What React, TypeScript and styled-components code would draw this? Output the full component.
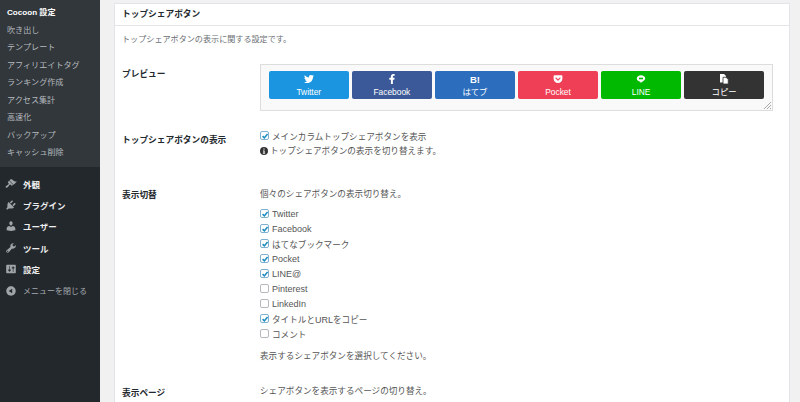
import React from "react";
import styled, { createGlobalStyle } from "styled-components";
import { FaTwitter, FaFacebookF, FaGetPocket } from "react-icons/fa";

const GlobalStyle = createGlobalStyle`
  html, body {
    margin: 0;
    height: 402px;
    overflow: hidden;
    background: #f1f1f1;
    font-family: "Liberation Sans", "Noto Sans CJK JP", sans-serif;
    font-size: 8.1px;
    color: #444;
  }
`;

const Page = styled.div`
  display: flex;
  height: 402px;
  overflow: hidden;
`;

const Sidebar = styled.nav`
  width: 100px;
  flex: none;
  background: #23282d;
`;

const SubMenu = styled.ul`
  margin: 0;
  padding: 4px 0 5px;
  list-style: none;
  background: #32373c;
`;

const SubItem = styled.li<{ $current?: boolean }>`
  height: 17.5px;
  line-height: 17.5px;
  padding-left: 7px;
  color: ${(p) => (p.$current ? "#fff" : "#b4b9be")};
  font-weight: ${(p) => (p.$current ? 700 : 400)};
`;

const MainMenu = styled.ul`
  margin: 0;
  padding: 6.5px 0 0;
  list-style: none;
`;

const MainItem = styled.li<{ $muted?: boolean }>`
  display: flex;
  align-items: center;
  gap: 6px;
  height: 21.4px;
  padding-left: 5px;
  font-size: ${(p) => (p.$muted ? "8px" : "8.5px")};
  color: ${(p) => (p.$muted ? "#a5aaaf" : "#eee")};
  font-weight: ${(p) => (p.$muted ? 400 : 700)};
  svg {
    width: 12px;
    height: 12px;
    flex: none;
    fill: #a0a5aa;
  }
`;

const Content = styled.main`
  flex: 1;
  min-width: 0;
  padding: 3px 10px 0 14px;
`;

const Card = styled.section`
  background: #fff;
  border: 1px solid #e2e4e7;
  box-sizing: border-box;
  height: 500px;
`;

const CardTitle = styled.h2`
  margin: 0;
  height: 21px;
  line-height: 21px;
  padding-left: 7px;
  border-bottom: 1px solid #e5e5e5;
  font-size: 8.7px;
  font-weight: 700;
  color: #23282d;
`;

const CardBody = styled.div`
  padding: 8px 8px 0 7px;
`;

const Lead = styled.p`
  margin: 0 0 18px;
  height: 12px;
  line-height: 12px;
  color: #6b6f73;
`;

const Row = styled.div<{ $height: number }>`
  display: grid;
  grid-template-columns: 138px 1fr;
  min-height: ${(p) => p.$height}px;
`;

const RowLabel = styled.div<{ $top: number }>`
  padding-top: ${(p) => p.$top}px;
  line-height: 12px;
  font-size: 8.7px;
  font-weight: 700;
  color: #23282d;
`;

const PreviewBox = styled.div`
  position: relative;
  width: 513px;
  height: 47px;
  box-sizing: border-box;
  display: flex;
  gap: 3.5px;
  padding: 6px 8px 0 8px;
  border: 1px solid #ddd;
  background: #f9f9f9;
`;

const ResizeGrip = styled.svg`
  position: absolute;
  right: 0;
  bottom: 0;
  width: 9px;
  height: 9px;
  stroke: #aaa;
  stroke-width: 1;
`;

const ShareButton = styled.div<{ $bg: string }>`
  flex: 1;
  height: 28px;
  box-sizing: border-box;
  display: flex;
  flex-direction: column;
  align-items: center;
  padding-top: 3px;
  border-radius: 2px;
  background: ${(p) => p.$bg};
  color: #fff;
  font-size: 8.4px;
  line-height: 10px;
  svg {
    width: 10px;
    height: 10px;
    margin-bottom: 3px;
    fill: #fff;
    flex: none;
  }
`;

const HatenaMark = styled.b`
  height: 13px;
  line-height: 11px;
  font-size: 9.5px;
`;

const CheckRow = styled.label`
  display: flex;
  align-items: center;
  gap: 3px;
  height: 15px;
  font-size: 8.6px;
  color: #555;
`;

const LatinText = styled.span`
  font-size: 9px;
`;

const Box = styled.span<{ $checked?: boolean }>`
  width: 9px;
  height: 9px;
  flex: none;
  box-sizing: border-box;
  display: flex;
  align-items: center;
  justify-content: center;
  border: 1px solid ${(p) => (p.$checked ? "#7fb0d0" : "#b4b9be")};
  border-radius: 2px;
  background: #fff;
  svg {
    width: 8px;
    height: 8px;
    flex: none;
    fill: none;
    stroke: #1e8cbe;
    stroke-width: 2;
  }
`;

const Note = styled.div<{ $before?: number; $after?: number }>`
  height: 15px;
  line-height: 15px;
  margin-top: ${(p) => p.$before ?? 0}px;
  margin-bottom: ${(p) => p.$after ?? 0}px;
  font-size: 8.6px;
  color: #555;
`;

const InfoIcon = styled.svg`
  width: 8px;
  height: 8px;
  margin-right: 2px;
  vertical-align: -1px;
  fill: #333;
`;

const Check = ({ checked, label }: { checked?: boolean; label: string }) => (
  <CheckRow>
    <Box $checked={checked}>
      {checked && (
        <svg viewBox="0 0 10 10">
          <path d="M2 5.2 4.2 7.4 8.2 2.6" />
        </svg>
      )}
    </Box>
    <span>
      {label
        .split(/([A-Za-z@]+)/)
        .map((part, i) => (i % 2 ? <LatinText key={i}>{part}</LatinText> : part))}
    </span>
  </CheckRow>
);

const dashicons = {
  appearance:
    "M14.48 11.06L7.41 3.99l1.5-1.5c.5-.56 2.3-.47 3.51.32 1.21.8 1.43 1.28 2.91 2.1 1.18.64 2.45 1.26 4.45.85zm-.71.71L6.7 4.7 4.93 6.47c-.39.39-.39 1.02 0 1.41l1.06 1.06c.39.39.39 1.03 0 1.42-.6.6-1.43 1.11-2.21 1.69-.35.26-.7.53-1.01.84C1.43 13.23.4 14.85 1.4 15.85c.99 1 2.62-.03 3.96-1.37.31-.31.58-.66.85-1.02.57-.78 1.08-1.61 1.69-2.21.39-.39 1.02-.39 1.41 0l1.06 1.06c.39.39 1.02.39 1.41 0z",
  plugins:
    "M13.11 4.36L9.87 7.6 8 5.73l3.24-3.24c.35-.34 1.05-.2 1.56.32.52.51.66 1.21.31 1.55zm-8 1.77l.91-1.12 9.01 9.01-1.19.84c-.71.71-2.63 1.16-3.82 1.16H6.14L4.9 17.26c-.59.59-1.54.59-2.12 0-.59-.58-.59-1.53 0-2.12l1.24-1.24v-3.88c0-1.13.4-3.19 1.09-3.89zm7.26 3.97l3.24-3.24c.34-.35 1.04-.21 1.55.31.52.51.66 1.21.31 1.55l-3.24 3.25z",
  users:
    "M10 9.25c-2.27 0-2.73-3.44-2.73-3.44C7 4.02 7.82 2 9.97 2c2.16 0 2.98 2.02 2.71 3.81 0 0-.41 3.44-2.68 3.44zm0 2.57L12.72 10c2.39 0 4.52 2.33 4.52 4.53v2.49s-3.65 1.13-7.24 1.13c-3.65 0-7.24-1.13-7.24-1.13v-2.49c0-2.25 1.94-4.48 4.47-4.48z",
  tools:
    "M16.68 9.77c-1.34 1.34-3.3 1.67-4.95.99l-5.41 6.52c-.99.99-2.59.99-3.58 0s-.99-2.59 0-3.58l6.52-5.42c-.68-1.65-.35-3.61.99-4.95 1.28-1.28 3.12-1.62 4.72-1.06l-2.89 2.89 2.82 2.82 2.86-2.87c.53 1.58.18 3.39-1.08 4.66zM3.81 16.21c.4.39 1.04.39 1.43 0 .4-.4.4-1.04 0-1.43-.39-.4-1.03-.4-1.43 0-.39.39-.39 1.03 0 1.43z",
  settings:
    "M18 16V4c0-.55-.45-1-1-1H3c-.55 0-1 .45-1 1v12c0 .55.45 1 1 1h14c.55 0 1-.45 1-1zM8 11h1c.55 0 1 .45 1 1s-.45 1-1 1H8v1.5c0 .28-.22.5-.5.5s-.5-.22-.5-.5V13H6c-.55 0-1-.45-1-1s.45-1 1-1h1V5.5c0-.28.22-.5.5-.5s.5.22.5.5V11zm5-2h-1c-.55 0-1-.45-1-1s.45-1 1-1h1V5.5c0-.28.22-.5.5-.5s.5.22.5.5V7h1c.55 0 1 .45 1 1s-.45 1-1 1h-1v5.5c0 .28-.22.5-.5.5s-.5-.22-.5-.5V9z",
  collapse:
    "M10 2.16c4.33 0 7.84 3.51 7.84 7.84s-3.51 7.84-7.84 7.84S2.16 14.33 2.16 10 5.71 2.16 10 2.16zm2 11.72V6.12L6.18 9.97z",
};

const subItems = [
  "吹き出し",
  "テンプレート",
  "アフィリエイトタグ",
  "ランキング作成",
  "アクセス集計",
  "高速化",
  "バックアップ",
  "キャッシュ削除",
];

const mainItems: { label: string; icon: keyof typeof dashicons; muted?: boolean }[] = [
  { label: "外観", icon: "appearance" },
  { label: "プラグイン", icon: "plugins" },
  { label: "ユーザー", icon: "users" },
  { label: "ツール", icon: "tools" },
  { label: "設定", icon: "settings" },
  { label: "メニューを閉じる", icon: "collapse", muted: true },
];

const toggles = [
  { label: "Twitter", checked: true },
  { label: "Facebook", checked: true },
  { label: "はてなブックマーク", checked: true },
  { label: "Pocket", checked: true },
  { label: "LINE@", checked: true },
  { label: "Pinterest" },
  { label: "LinkedIn" },
  { label: "タイトルとURLをコピー", checked: true },
  { label: "コメント" },
];

const LineIcon = () => (
  <svg viewBox="0 0 20 20">
    <path d="M10 2.500C5.300 2.500 1.500 5.400 1.500 9c0 3.200 3 5.900 7 6.400.8.200.5 1.100.4 1.700 0 .5.300.5.700.3 1.400-.8 6.400-3.700 7.800-5.900.7-.9 1.100-1.700 1.100-2.500 0-3.600-3.800-6.500-8.500-6.500z" />
    <path d="M6 7.400h8v3.200H6z" fill="#00b900" />
  </svg>
);

const CopyIcon = () => (
  <svg viewBox="0 0 20 20">
    <path d="M2 0h8l4 4v13H2z" />
    <path d="M8 6.500h6l4.500 4.500v9H8z" stroke="#333" strokeWidth="1.6" />
  </svg>
);

export default function App() {
  return (
    <>
      <GlobalStyle />
      <Page>
        <Sidebar>
          <SubMenu>
            <SubItem $current>Cocoon 設定</SubItem>
            {subItems.map((item) => (
              <SubItem key={item}>{item}</SubItem>
            ))}
          </SubMenu>
          <MainMenu>
            {mainItems.map((item) => (
              <MainItem key={item.label} $muted={item.muted}>
                <svg viewBox="0 0 20 20">
                  <path d={dashicons[item.icon]} />
                </svg>
                {item.label}
              </MainItem>
            ))}
          </MainMenu>
        </Sidebar>
        <Content>
          <Card>
            <CardTitle>トップシェアボタン</CardTitle>
            <CardBody>
              <Lead>トップシェアボタンの表示に関する設定です。</Lead>
              <Row $height={64}>
                <RowLabel $top={4}>プレビュー</RowLabel>
                <PreviewBox>
                  <ShareButton $bg="#1b95e0">
                    <FaTwitter />
                    Twitter
                  </ShareButton>
                  <ShareButton $bg="#3b5998">
                    <FaFacebookF />
                    Facebook
                  </ShareButton>
                  <ShareButton $bg="#2c6ebd">
                    <HatenaMark>B!</HatenaMark>
                    はてブ
                  </ShareButton>
                  <ShareButton $bg="#ef3f56">
                    <FaGetPocket />
                    Pocket
                  </ShareButton>
                  <ShareButton $bg="#00b900">
                    <LineIcon />
                    LINE
                  </ShareButton>
                  <ShareButton $bg="#333">
                    <CopyIcon />
                    コピー
                  </ShareButton>
                  <ResizeGrip viewBox="0 0 9 9">
                    <path d="M1 8 8 1M4 8 8 4M7 8 8 7" />
                  </ResizeGrip>
                </PreviewBox>
              </Row>
              <Row $height={59}>
                <RowLabel $top={6}>トップシェアボタンの表示</RowLabel>
                <div>
                  <Check checked label="メインカラムトップシェアボタンを表示" />
                  <Note $before={1}>
                    <InfoIcon viewBox="0 0 20 20">
                      <path d="M10 0a10 10 0 1 0 0 20 10 10 0 0 0 0-20zm-1.500 3.500h3v3h-3zM7.500 8.500h4v7h1.500v1.500H7v-1.500h1.500V10h-1z" fillRule="evenodd" />
                    </InfoIcon>
                    トップシェアボタンの表示を切り替えます。
                  </Note>
                </div>
              </Row>
              <Row $height={197}>
                <RowLabel $top={2}>表示切替</RowLabel>
                <div>
                  <Note $after={4}>個々のシェアボタンの表示切り替え。</Note>
                  {toggles.map((t) => (
                    <Check key={t.label} checked={t.checked} label={t.label} />
                  ))}
                  <Note $before={8}>表示するシェアボタンを選択してください。</Note>
                </div>
              </Row>
              <Row $height={20}>
                <RowLabel $top={3}>表示ページ</RowLabel>
                <Note>シェアボタンを表示するページの切り替え。</Note>
              </Row>
            </CardBody>
          </Card>
        </Content>
      </Page>
    </>
  );
}
